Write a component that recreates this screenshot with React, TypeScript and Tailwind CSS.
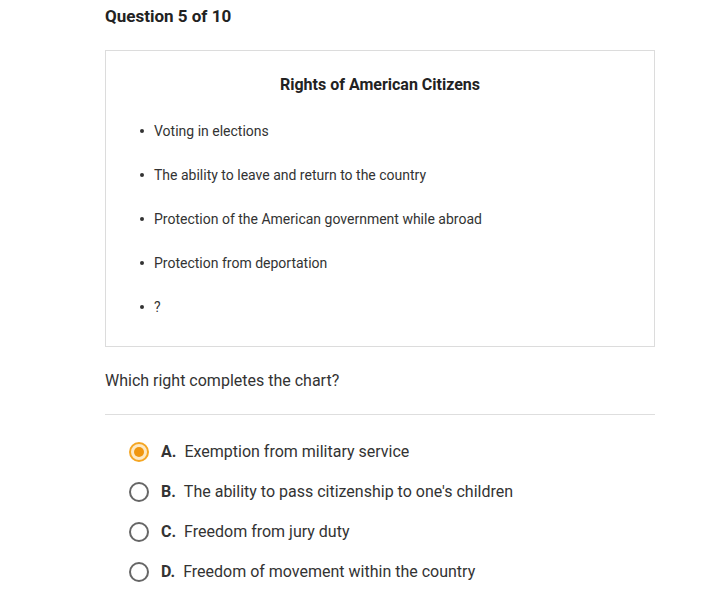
const items = [
  'Voting in elections',
  'The ability to leave and return to the country',
  'Protection of the American government while abroad',
  'Protection from deportation',
  '?',
]

const options = [
  { letter: 'A.', text: 'Exemption from military service', selected: true },
  { letter: 'B.', text: "The ability to pass citizenship to one's children" },
  { letter: 'C.', text: 'Freedom from jury duty' },
  { letter: 'D.', text: 'Freedom of movement within the country' },
]

function Radio({ selected }: { selected?: boolean }) {
  if (selected) {
    return (
      <span className="flex h-[20px] w-[20px] shrink-0 items-center justify-center rounded-full border-2 border-[#f5a623] bg-[#fde9c4]">
        <span className="h-[10px] w-[10px] rounded-full bg-[#f0960e]" />
      </span>
    )
  }
  return <span className="h-[20px] w-[20px] shrink-0 rounded-full border-2 border-[#666]" />
}

export default function App() {
  return (
    <div className="min-h-[597px] bg-white font-['Roboto',sans-serif] text-[#333]">
      <div className="ml-[105px] w-[550px] pt-[6px]">
        <h1 className="text-[17px] font-bold leading-[21px] text-[#222]">Question 5 of 10</h1>

        <div className="mt-[23px] h-[297px] border border-[#dcdcdc] pt-[24px]">
          <h2 className="text-center text-[16px] font-bold leading-[20px] text-[#222]">
            Rights of American Citizens
          </h2>
          <ul className="mt-[26px] pl-[34px]">
            {items.map((item) => (
              <li key={item} className="flex h-[44px] items-start text-[14px] leading-[20px]">
                <span className="mr-[10px] mt-[8px] h-[4px] w-[4px] shrink-0 rounded-full bg-[#333]" />
                <span>{item}</span>
              </li>
            ))}
          </ul>
        </div>

        <p className="mt-[23px] text-[16px] leading-[22px]">Which right completes the chart?</p>

        <div className="mt-[22px] border-t border-[#dedede]" />

        <div className="mt-[27px] pl-[24px]">
          {options.map((o) => (
            <div key={o.letter} className="flex h-[40px] items-start gap-[12px]">
              <Radio selected={o.selected} />
              <span className="text-[16px] leading-[20px]">
                <span className="mr-[8px] font-bold">{o.letter}</span>
                {o.text}
              </span>
            </div>
          ))}
        </div>
      </div>
    </div>
  )
}
